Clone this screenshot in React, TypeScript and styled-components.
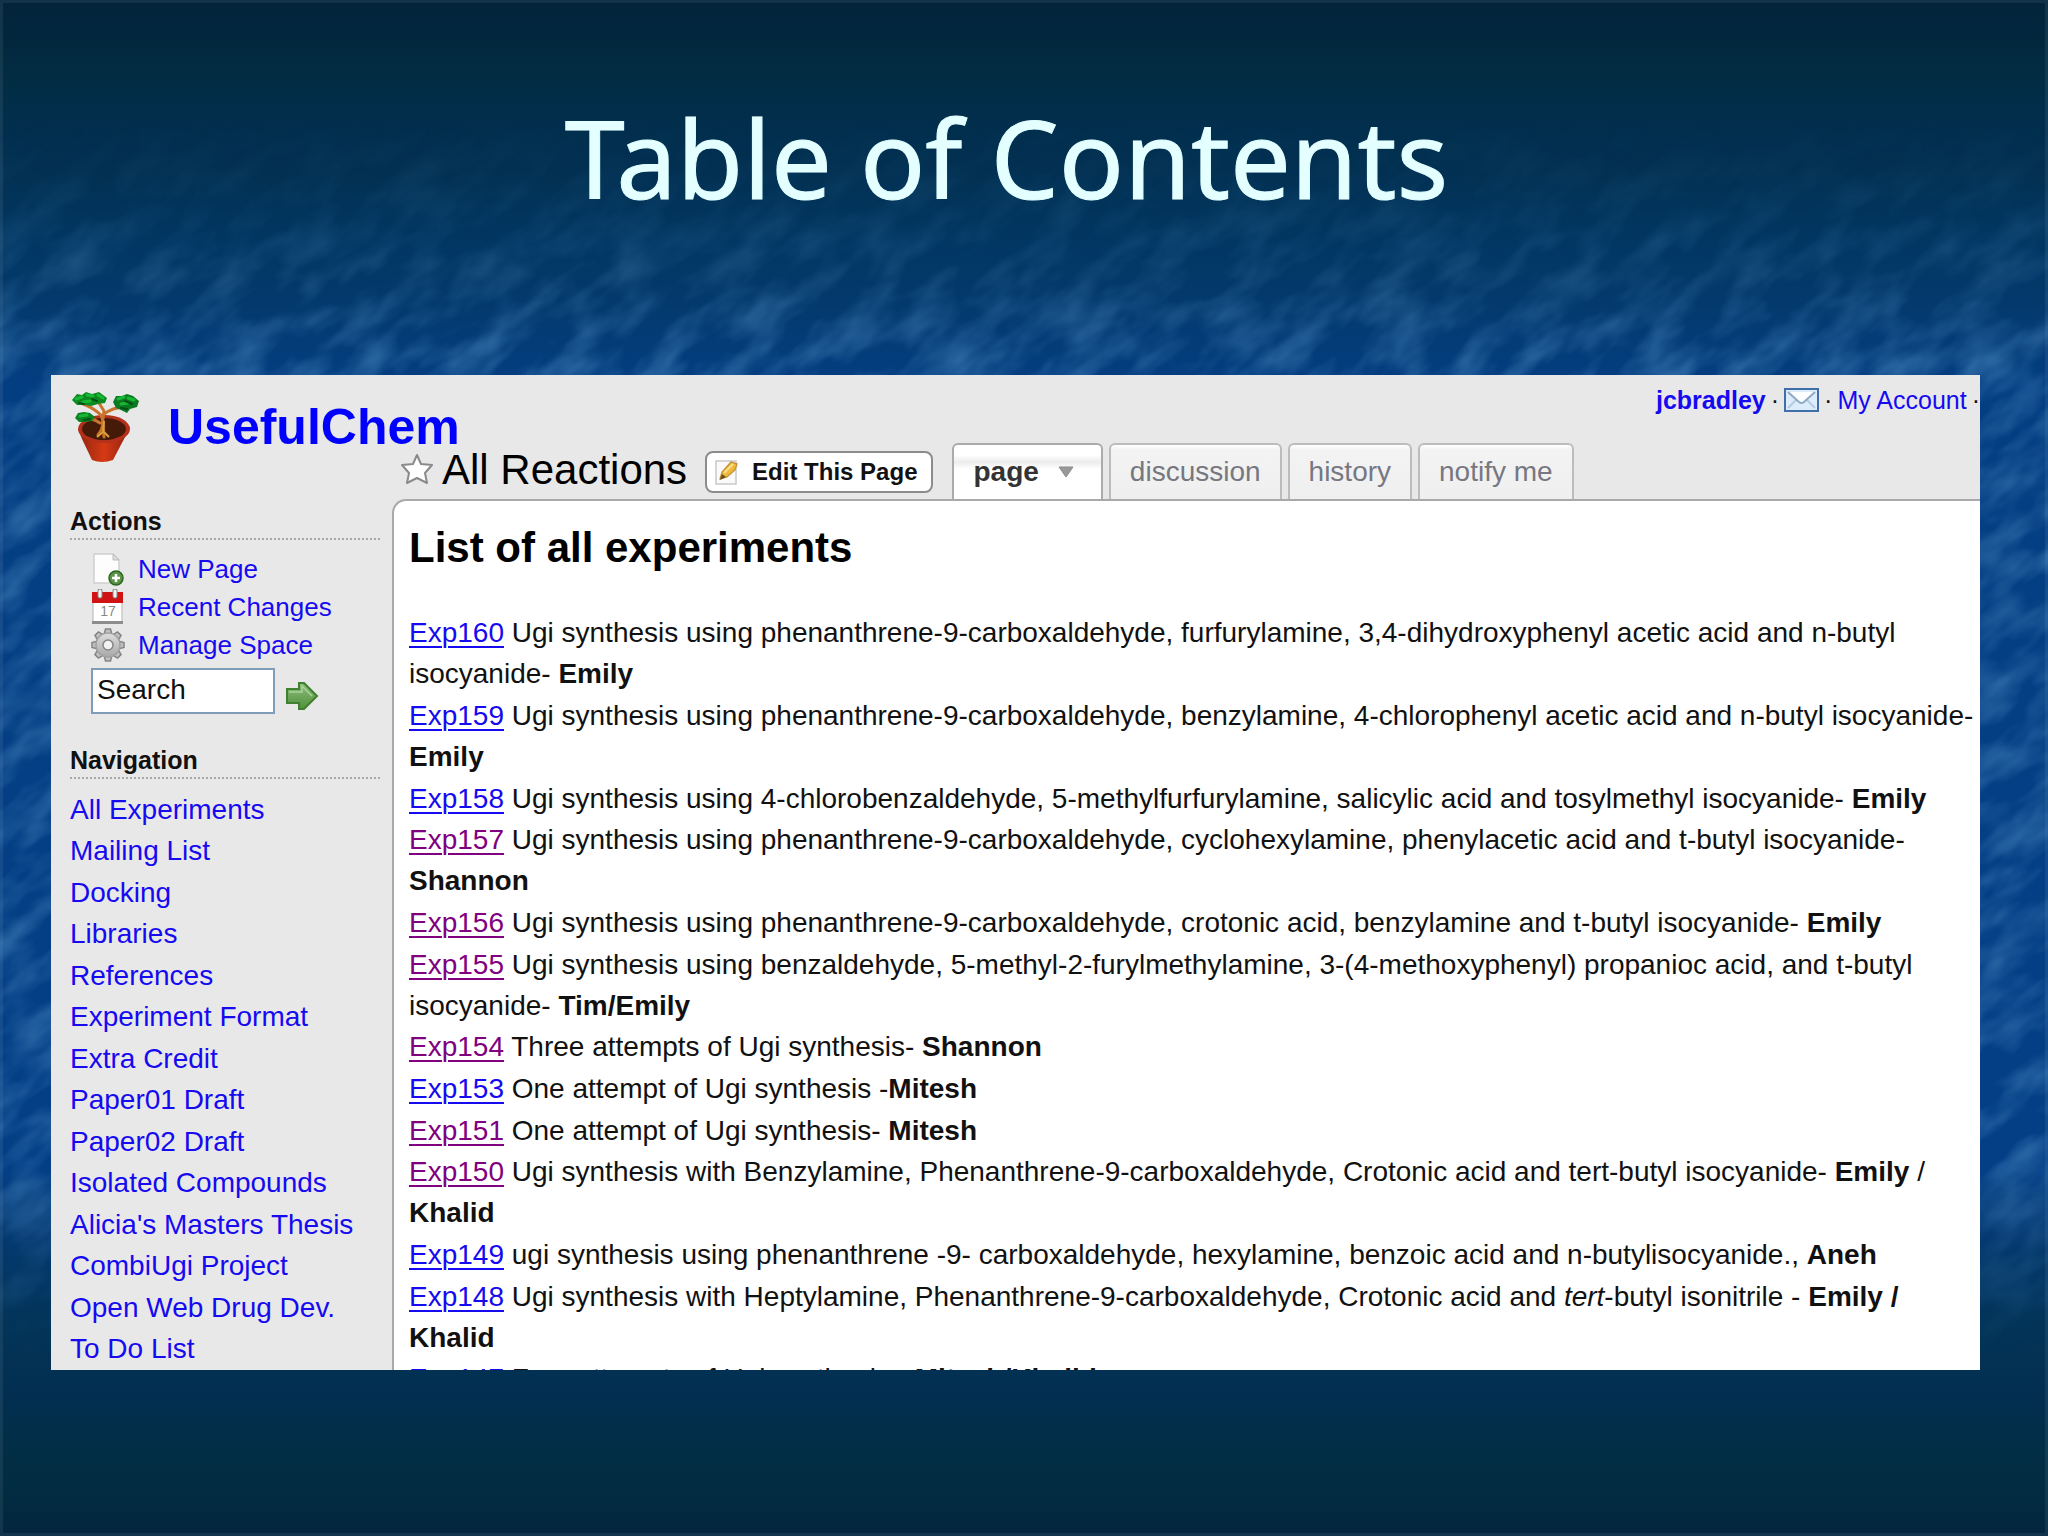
import React from "react";
import styled, { createGlobalStyle } from "styled-components";

const sans = `"Liberation Sans", Arial, Helvetica, sans-serif`;
const linkBlue = "#160af0";

const GlobalStyle = createGlobalStyle`
  *, *::before, *::after { box-sizing: border-box; }
  body { margin: 0; background: #02263e; }
  a { text-decoration: none; color: ${linkBlue}; }
  ul { list-style: none; margin: 0; padding: 0; }
  h1, h2, h3 { margin: 0; }
`;

const Slide = styled.div`
  position: relative;
  isolation: isolate;
  display: flex;
  flex-direction: column;
  height: 100vh;
  overflow: hidden;
  font-family: ${sans};
  color: #111;
  box-shadow: inset 0 0 0 3px rgba(255, 255, 255, 0.07);
  background: linear-gradient(
    to bottom,
    #02243b 0%,
    #02283e 3%,
    #022c42 5%,
    #022e4b 7%,
    #023052 11%,
    #023660 15%,
    #033a6e 20%,
    #043e82 25%,
    #043f86 76%,
    #04396e 81%,
    #033459 86%,
    #022f50 91%,
    #022d42 96%,
    #02263e 100%
  );
`;

const Water = styled.svg`
  position: absolute;
  inset: 0;
  z-index: -1;
  width: 100%;
  height: 100%;
`;

const SlideTitle = styled.h1`
  padding: 84px 35px 144px 0;
  font-family: "Noto Sans", Tahoma, sans-serif;
  font-weight: 400;
  font-size: 108px;
  line-height: 147px;
  text-align: center;
  color: #e3ffff;
  -webkit-text-stroke: 1px #e3ffff;
`;

const Wiki = styled.div`
  flex: 1;
  min-height: 0;
  margin: 0 68px 166px 51px;
  display: grid;
  grid-template-columns: 341px minmax(0, 1fr);
  overflow: hidden;
  background: #e8e8e8;
`;

const Sidebar = styled.aside`
  display: flex;
  flex-direction: column;
  padding: 16px 12px 0 19px;
`;

const Brand = styled.a`
  display: flex;
  align-items: center;
  gap: 28px;
  height: 72px;
  margin-bottom: 43px;
  font-size: 50px;
  line-height: 56px;
  font-weight: 700;
  white-space: nowrap;
  color: #0000ff;
  svg { flex: none; }
`;

const SideHeading = styled.h2`
  padding-bottom: 2px;
  border-bottom: 2px dotted #a8a8a8;
  font-size: 25px;
  line-height: 30px;
  font-weight: 700;
`;

const ActionList = styled.ul`
  padding: 10px 0 0 20px;
`;

const ActionLink = styled.a`
  display: flex;
  align-items: center;
  gap: 12px;
  height: 38px;
  font-size: 26px;
  line-height: 38px;
`;

const SearchForm = styled.form`
  display: flex;
  align-items: center;
  gap: 10px;
  margin: 4px 0 31px 21px;
`;

const SearchBox = styled.input`
  width: 184px;
  height: 46px;
  padding: 0 4px 2px;
  border: 2px solid #7f9db9;
  background: #fff;
  font-family: ${sans};
  font-size: 28px;
  color: #111;
  outline: none;
`;

const GoButton = styled.button`
  display: flex;
  padding: 9px 0 0;
  border: 0;
  background: none;
`;

const NavList = styled.ul`
  padding-top: 10px;
`;

const NavItem = styled.li`
  font-size: 28px;
  line-height: 41px;
  white-space: nowrap;
  &:nth-child(2n) { margin-bottom: 1px; }
`;

const Main = styled.main`
  display: flex;
  flex-direction: column;
  min-height: 0;
`;

const AccountBar = styled.div`
  display: flex;
  align-items: center;
  justify-content: flex-end;
  gap: 5px;
  height: 50px;
  margin-bottom: 18px;
  font-size: 25px;
  line-height: 50px;
`;

const UserLink = styled.a`
  font-weight: 700;
`;

const TitleBar = styled.div`
  display: flex;
  align-items: flex-end;
  height: 58px;
  margin-bottom: -2px;
  padding-left: 8px;
`;

const PageName = styled.h2`
  display: flex;
  align-items: center;
  gap: 8px;
  height: 56px;
  margin-right: 18px;
  padding-bottom: 6px;
  font-size: 42px;
  line-height: 50px;
  font-weight: 400;
  white-space: nowrap;
  color: #000;
`;

const EditButton = styled.button`
  display: flex;
  align-items: center;
  gap: 11px;
  height: 42px;
  margin: 0 19px 8px 0;
  padding: 0 14px 0 6px;
  border: 2px solid #8c8c8c;
  border-radius: 8px;
  background: #fff;
  font-family: ${sans};
  font-size: 24px;
  line-height: 30px;
  font-weight: 700;
  white-space: nowrap;
  color: #111;
`;

const Tabs = styled.nav`
  display: flex;
  gap: 6px;
`;

const Tab = styled.a<{ $active?: boolean }>`
  display: flex;
  align-items: center;
  gap: 18px;
  height: 58px;
  padding: 0 ${(p) => (p.$active ? 26 : 19)}px 0 19px;
  border: 2px solid ${(p) => (p.$active ? "#ababab" : "#bcbcbc")};
  border-bottom-color: ${(p) => (p.$active ? "#fff" : "#d4d4d4")};
  border-radius: 6px 6px 0 0;
  background: ${(p) =>
    p.$active
      ? "linear-gradient(#fff 0, #fff 10px, #ececec 17px, #fff 24px)"
      : "linear-gradient(#fff 0, #f3f3f3 5px, #efefef 100%)"};
  font-size: 28px;
  line-height: 40px;
  font-weight: ${(p) => (p.$active ? 700 : 400)};
  color: ${(p) => (p.$active ? "#333" : "#777781")};
  white-space: nowrap;
`;

const Article = styled.article`
  flex: 1;
  min-height: 0;
  padding: 23px 0 0 15px;
  border: 2px solid #a9a9ab;
  border-width: 2px 0 0 2px;
  border-top-left-radius: 14px;
  background: #fff;
`;

const ArticleTitle = styled.h3`
  margin-bottom: 40px;
  font-size: 42px;
  line-height: 48px;
  font-weight: 700;
  color: #000;
`;

const Experiment = styled.li`
  font-size: 28px;
  line-height: 41px;
  &:not(:nth-child(3n)) { margin-bottom: 1px; }
`;

const ExpLink = styled.a<{ $visited?: boolean }>`
  color: ${(p) => (p.$visited ? "#800080" : linkBlue)};
  text-decoration: underline;
  text-decoration-thickness: 2px;
  text-underline-offset: 4px;
`;

const BonsaiLogo = () => (
  <svg width="70" height="72" viewBox="0 0 70 72" aria-hidden="true">
    <defs>
      <linearGradient id="pot" x1="0" x2="1">
        <stop offset="0" stopColor="#8e2410" />
        <stop offset=".5" stopColor="#d63a14" />
        <stop offset="1" stopColor="#8c2010" />
      </linearGradient>
    </defs>
    <path d="M8 38 L12 48 L22 69 Q32 73 43 69 L54 48 L60 36 Q34 18 8 38Z" fill="url(#pot)" />
    <ellipse cx="34" cy="38" rx="26" ry="14" fill="#b5301a" />
    <ellipse cx="34" cy="38" rx="22" ry="11" fill="#451a08" />
    <path d="M28 44 Q36 34 31 24 Q22 16 13 13 M33 28 L34 20 L29 12 M33 24 Q42 16 56 16 M30 32 Q22 26 14 29 M33 30 L34 46" fill="none" stroke="#c8742c" strokeWidth="3" strokeLinecap="round" />
    <path d="M27 46 L33 41 L34 30 M34 41 L39 46" fill="none" stroke="#d9a03c" strokeWidth="2" />
    <path d="M2 9 L7 3 L12 4 L16 1 L22 3 L29 1 L33 4 L37 7 L35 12 L28 13 L21 15 L15 14 L7 14Z" fill="#0b8a1f" />
    <path d="M43 11 L46 5 L52 5 L57 3 L63 5 L69 10 L67 16 L60 18 L57 22 L51 19 L46 17Z" fill="#0a7a20" />
    <path d="M5 27 L8 22 L14 21 L20 22 L25 26 L22 30 L15 31 L9 31Z" fill="#0b8222" />
    <path d="M6 8 L12 6 M17 4 L23 5 M28 4 L33 7 M13 11 L20 10 M48 8 L54 6 M58 7 L64 9 M51 13 L58 12 M10 25 L17 24" stroke="#18b834" strokeWidth="3" strokeLinecap="round" />
    <path d="M9 12 L14 13 M22 8 L27 10 M55 10 L62 13 M51 17 L57 18 M14 29 L20 28" stroke="#064f14" strokeWidth="2" strokeLinecap="round" />
  </svg>
);

const NewPageIcon = () => (
  <svg width="36" height="34" viewBox="0 0 36 34" aria-hidden="true">
    <path d="M4 2 H23 L29 8 V31 H4Z" fill="#fdfdfd" stroke="#cfcfcf" strokeWidth="1.5" />
    <path d="M23 2 V8 H29Z" fill="#ddd" stroke="#bbb" />
    <circle cx="26" cy="26" r="7" fill="#5b9447" stroke="#2d6420" strokeWidth="1.5" />
    <path d="M26 22 V30 M22 26 H30" stroke="#fff" strokeWidth="2.5" />
  </svg>
);

const CalendarIcon = () => (
  <svg width="36" height="36" viewBox="0 0 36 36" aria-hidden="true">
    <rect x="3" y="4" width="29" height="30" fill="#fff" stroke="#b5b5b5" />
    <rect x="2" y="3" width="31" height="11" fill="#d01414" />
    <path d="M2 33.500 H33" stroke="#8d8d8d" strokeWidth="3" />
    <path d="M10 2 V7 M25 2 V7" stroke="#888" strokeWidth="5" strokeLinecap="round" />
    <path d="M10 2 V7 M25 2 V7" stroke="#f4f4f4" strokeWidth="3" strokeLinecap="round" />
    <text x="18" y="27" fontSize="14" textAnchor="middle" fill="#888" fontFamily="Liberation Sans, sans-serif">17</text>
  </svg>
);

const GearIcon = () => (
  <svg width="36" height="36" viewBox="-18 -18 36 36" aria-hidden="true">
    <defs>
      <linearGradient id="steel" x1="0" y1="0" x2="0" y2="1">
        <stop offset="0" stopColor="#dedede" />
        <stop offset="1" stopColor="#a8a8a8" />
      </linearGradient>
    </defs>
    <g fill="#c0c0c0" stroke="#858585" strokeWidth="1.500">
      {[0, 45, 90, 135, 180, 225, 270, 315].map((deg) => (
        <path key={deg} d="M-4 -10 L-2.500 -16 H2.500 L4 -10Z" transform={`rotate(${deg})`} />
      ))}
      <circle r="12" fill="url(#steel)" stroke="#a0a0a0" />
      <circle r="5" fill="#f2f2f2" />
    </g>
  </svg>
);

const GoArrow = () => (
  <svg width="34" height="30" viewBox="0 0 34 30" aria-hidden="true">
    <defs>
      <linearGradient id="leaf" x1="0" y1="0" x2="0" y2="1">
        <stop offset="0" stopColor="#8fbc7c" />
        <stop offset="1" stopColor="#4f913b" />
      </linearGradient>
    </defs>
    <path d="M2 8 H14 V2 H19 L32 15 L19 28 H14 V22 H2Z" fill="url(#leaf)" stroke="#3f8130" strokeWidth="2" />
    <path d="M4 11 H17 V5 L27 15" fill="none" stroke="#a9d29a" strokeWidth="1.500" />
  </svg>
);

const EnvelopeIcon = () => (
  <svg width="35" height="24" viewBox="0 0 35 24" aria-hidden="true">
    <rect x="1" y="1" width="33" height="22" fill="#dcecfa" stroke="#3f6ea8" strokeWidth="2" />
    <path d="M4 20 L13 11 M31 20 L22 11" stroke="#b4cbe4" strokeWidth="2" />
    <path d="M4 4 L15 14 Q17.500 16 20 14 L31 4" fill="#fdfeff" stroke="#8fa9c6" strokeWidth="2" />
  </svg>
);

const StarIcon = () => (
  <svg width="34" height="34" viewBox="0 0 34 34" aria-hidden="true">
    <path d="M17 2 L21 11 L32 12 L25 20 L27 30 L17 25 L7 30 L9 20 L2 12 L13 11Z" fill="#fff" stroke="#8a8a8a" strokeWidth="2" strokeLinejoin="round" />
  </svg>
);

const EditIcon = () => (
  <svg width="28" height="28" viewBox="0 0 28 28" aria-hidden="true">
    <rect x="3" y="3" width="20" height="23" fill="#fafafa" stroke="#c9c9c9" strokeWidth="1.500" />
    <path d="M7 21 L9 14 L18 4 L24 6 L22 12 L14 19Z" fill="#efb93c" stroke="#c08e34" strokeWidth="1.200" />
    <path d="M11 15 L20 6" stroke="#fae08b" strokeWidth="2" />
    <path d="M7 22 L9 16 L13 19Z" fill="#6b4a1c" />
  </svg>
);

const CaretIcon = () => (
  <svg width="18" height="14" viewBox="0 0 18 14" aria-hidden="true">
    <path d="M2 2 H16 L9 12Z" fill="#999" stroke="#8a8a8a" strokeWidth="1" />
  </svg>
);

const actions = [
  { label: "New Page", icon: <NewPageIcon /> },
  { label: "Recent Changes", icon: <CalendarIcon /> },
  { label: "Manage Space", icon: <GearIcon /> },
];

const navigation = [
  "All Experiments",
  "Mailing List",
  "Docking",
  "Libraries",
  "References",
  "Experiment Format",
  "Extra Credit",
  "Paper01 Draft",
  "Paper02 Draft",
  "Isolated Compounds",
  "Alicia's Masters Thesis",
  "CombiUgi Project",
  "Open Web Drug Dev.",
  "To Do List",
];

type Entry = { id: string; text: React.ReactNode; by: React.ReactNode; visited?: boolean };

const experiments: Entry[] = [
  { id: "Exp160", text: "Ugi synthesis using phenanthrene-9-carboxaldehyde, furfurylamine, 3,4-dihydroxyphenyl acetic acid and n-butyl isocyanide- ", by: <b>Emily</b> },
  { id: "Exp159", text: "Ugi synthesis using phenanthrene-9-carboxaldehyde, benzylamine, 4-chlorophenyl acetic acid and n-butyl isocyanide- ", by: <b>Emily</b> },
  { id: "Exp158", text: "Ugi synthesis using 4-chlorobenzaldehyde, 5-methylfurfurylamine, salicylic acid and tosylmethyl isocyanide- ", by: <b>Emily</b> },
  { id: "Exp157", text: "Ugi synthesis using phenanthrene-9-carboxaldehyde, cyclohexylamine, phenylacetic acid and t-butyl isocyanide- ", by: <b>Shannon</b>, visited: true },
  { id: "Exp156", text: "Ugi synthesis using phenanthrene-9-carboxaldehyde, crotonic acid, benzylamine and t-butyl isocyanide- ", by: <b>Emily</b>, visited: true },
  { id: "Exp155", text: "Ugi synthesis using benzaldehyde, 5-methyl-2-furylmethylamine, 3-(4-methoxyphenyl) propanioc acid, and t-butyl isocyanide- ", by: <b>Tim/Emily</b>, visited: true },
  { id: "Exp154", text: "Three attempts of Ugi synthesis- ", by: <b>Shannon</b>, visited: true },
  { id: "Exp153", text: "One attempt of Ugi synthesis -", by: <b>Mitesh</b> },
  { id: "Exp151", text: "One attempt of Ugi synthesis- ", by: <b>Mitesh</b>, visited: true },
  { id: "Exp150", text: "Ugi synthesis with Benzylamine, Phenanthrene-9-carboxaldehyde, Crotonic acid and tert-butyl isocyanide- ", by: <><b>Emily</b> / <b>Khalid</b></>, visited: true },
  { id: "Exp149", text: "ugi synthesis using phenanthrene -9- carboxaldehyde, hexylamine, benzoic acid and n-butylisocyanide., ", by: <b>Aneh</b> },
  { id: "Exp148", text: <>Ugi synthesis with Heptylamine, Phenanthrene-9-carboxaldehyde, Crotonic acid and <i>tert</i>-butyl isonitrile - </>, by: <b>Emily / Khalid</b> },
  { id: "Exp147", text: "Four attempts of Ugi synthesis - ", by: <b>Mitesh/Khalid</b> },
];

export default function App() {
  return (
    <>
      <GlobalStyle />
      <Slide>
        <Water aria-hidden="true">
          <defs>
            <filter id="ripple" x="0" y="0" width="100%" height="100%">
              <feTurbulence type="fractalNoise" baseFrequency="0.016 0.034" numOctaves="3" seed="7" />
              <feColorMatrix values="0 0 0 0 .12  0 0 0 0 .36  0 0 0 0 .66  .9 0 0 0 -.34" />
            </filter>
            <linearGradient id="depth" x1="0" y1="0" x2="0" y2="1">
              <stop offset=".08" stopColor="#000" />
              <stop offset=".15" stopColor="#555" />
              <stop offset=".24" stopColor="#fff" />
              <stop offset=".75" stopColor="#fff" />
              <stop offset=".88" stopColor="#000" />
            </linearGradient>
            <mask id="surface">
              <rect width="100%" height="100%" fill="url(#depth)" />
            </mask>
          </defs>
          <g mask="url(#surface)">
            <g transform="rotate(-38)">
              <rect x="-1200" y="-200" width="3400" height="3200" filter="url(#ripple)" />
            </g>
          </g>
        </Water>
        <SlideTitle>Table of Contents</SlideTitle>
        <Wiki>
          <Sidebar>
            <Brand href="#home">
              <BonsaiLogo />
              UsefulChem
            </Brand>
            <SideHeading>Actions</SideHeading>
            <ActionList>
              {actions.map((a) => (
                <li key={a.label}>
                  <ActionLink href="#action">
                    {a.icon}
                    {a.label}
                  </ActionLink>
                </li>
              ))}
            </ActionList>
            <SearchForm onSubmit={(e) => e.preventDefault()}>
              <SearchBox aria-label="Search" defaultValue="Search" />
              <GoButton type="submit" aria-label="Go">
                <GoArrow />
              </GoButton>
            </SearchForm>
            <SideHeading>Navigation</SideHeading>
            <NavList>
              {navigation.map((label) => (
                <NavItem key={label}>
                  <a href="#page">{label}</a>
                </NavItem>
              ))}
            </NavList>
          </Sidebar>
          <Main>
            <AccountBar>
              <UserLink href="#user">jcbradley</UserLink>
              <span>·</span>
              <EnvelopeIcon />
              <span>·</span>
              <a href="#account">My Account</a>
              <span>·</span>
            </AccountBar>
            <TitleBar>
              <PageName>
                <StarIcon />
                All Reactions
              </PageName>
              <EditButton type="button">
                <EditIcon />
                Edit This Page
              </EditButton>
              <Tabs>
                <Tab href="#view" $active>
                  page
                  <CaretIcon />
                </Tab>
                <Tab href="#discussion">discussion</Tab>
                <Tab href="#history">history</Tab>
                <Tab href="#notify">notify me</Tab>
              </Tabs>
            </TitleBar>
            <Article>
              <ArticleTitle>List of all experiments</ArticleTitle>
              <ul>
                {experiments.map((e) => (
                  <Experiment key={e.id}>
                    <ExpLink href={`#${e.id}`} $visited={e.visited}>
                      {e.id}
                    </ExpLink>{" "}
                    {e.text}
                    {e.by}
                  </Experiment>
                ))}
              </ul>
            </Article>
          </Main>
        </Wiki>
      </Slide>
    </>
  );
}
